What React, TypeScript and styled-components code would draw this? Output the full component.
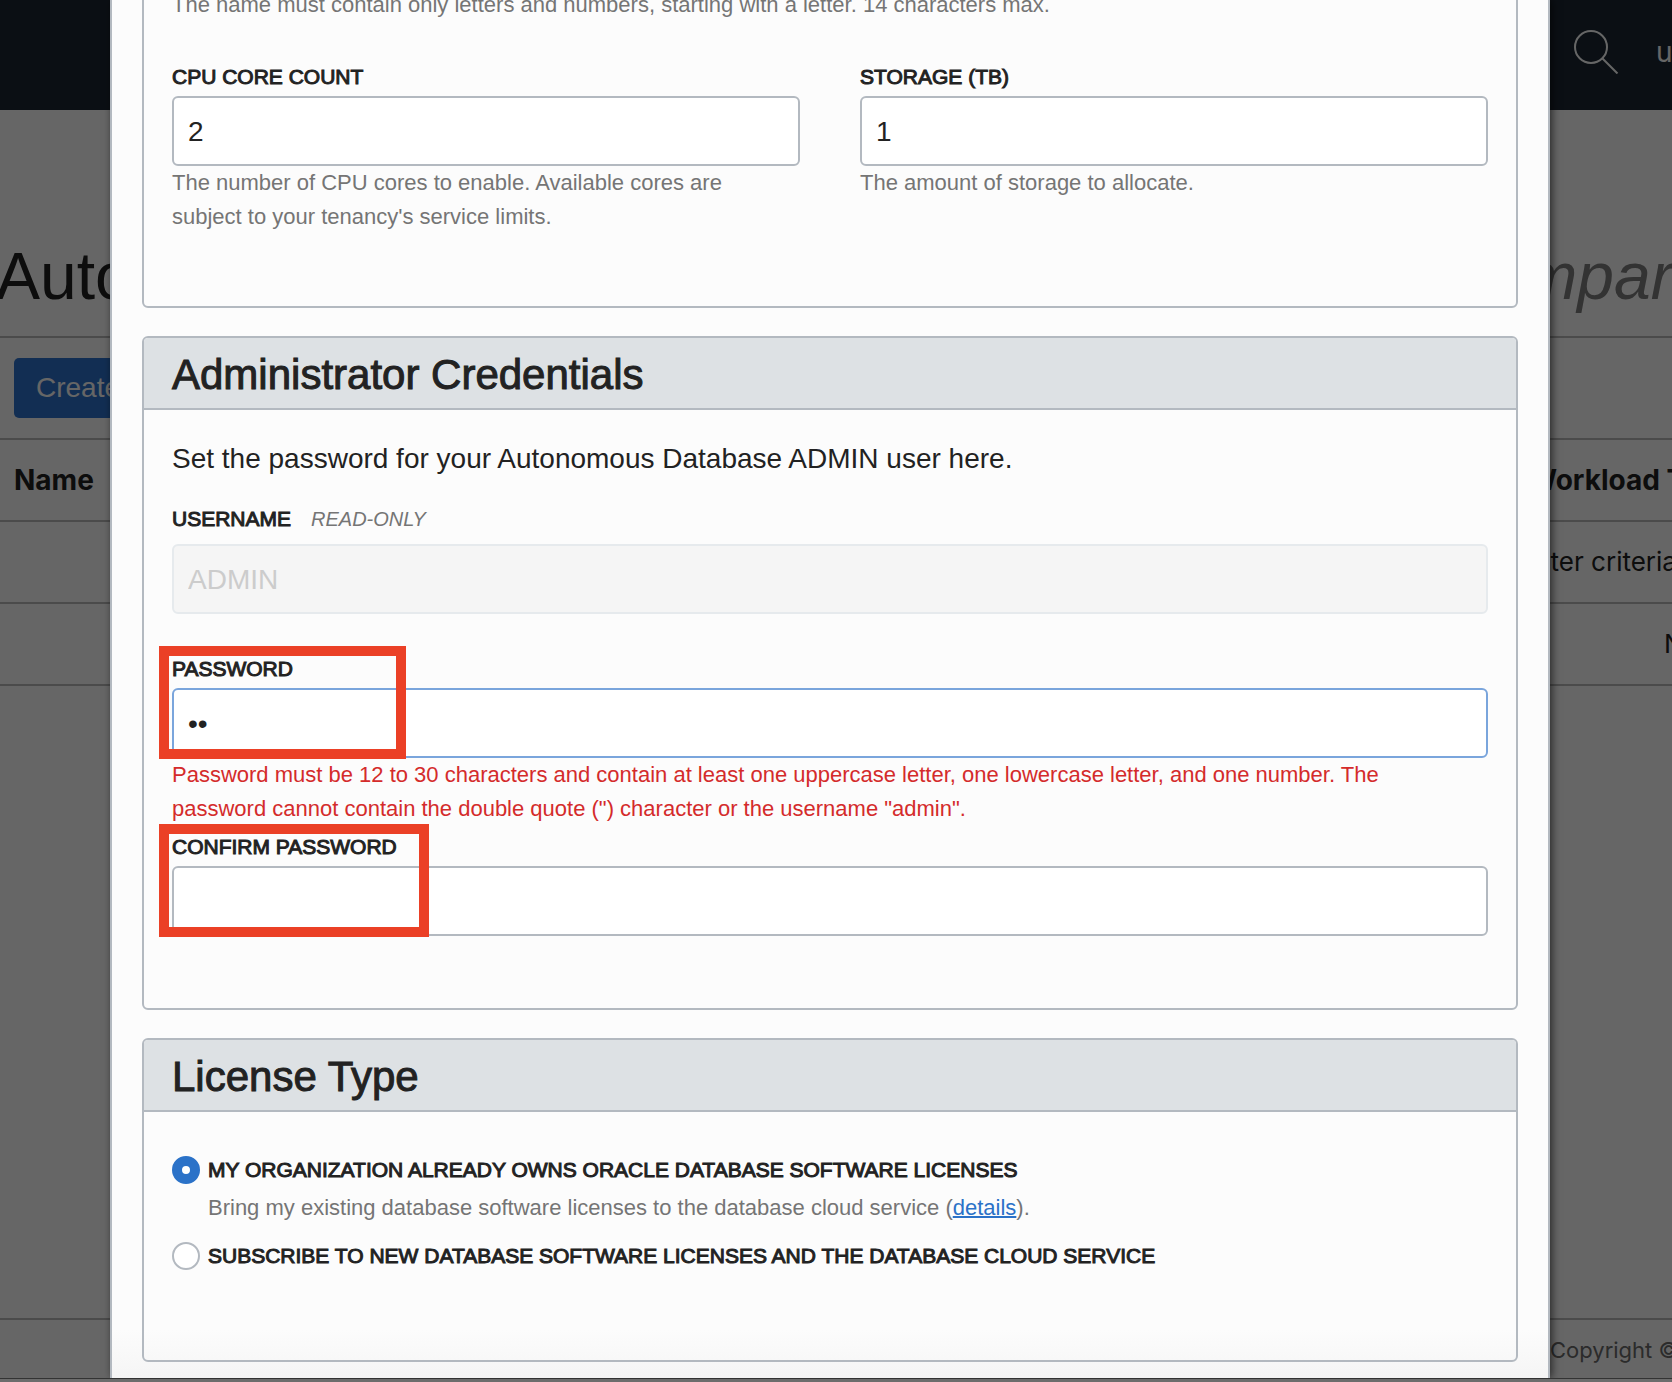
import React, { useState } from "react";
import styled, { createGlobalStyle, css } from "styled-components";

const sans = `"Liberation Sans", Arial, sans-serif`;
const ui = `Inter, "Open Sans", sans-serif`;

const ink = "#222222";
const muted = "#757575";
const line = "#b3b9c0";
const rule = "#bbbbbb";
const blue = "#2b72c8";

const GlobalStyle = createGlobalStyle`
  *, *::before, *::after { box-sizing: border-box; }
  body { margin: 0; overflow: hidden; font-family: ${sans}; color: ${ink}; }
`;

const Shell = styled.div`
  height: 100vh;
  display: flex;
  flex-direction: column;
  overflow: hidden;
`;

const Stage = styled.div`
  position: relative;
  flex: 1;
  min-height: 0;
  overflow: hidden;
`;

const WindowEdge = styled.div`
  height: 4px;
  background: #6c6c6c;
  border-top: 1px solid #333333;
`;

/* Console page behind the dialog */

const Console = styled.div`
  height: 100%;
  display: flex;
  flex-direction: column;
  background: #ffffff;
  white-space: nowrap;
`;

const TopBar = styled.header`
  flex: none;
  height: 110px;
  padding: 30px 0 36px;
  display: flex;
  justify-content: flex-end;
  gap: 36px;
  background: #1c2733;
  color: #ffffff;
  font: 28px/44px ${ui};
`;

const SearchButton = styled.button`
  width: 46px;
  height: 44px;
  padding: 0;
  border: 0;
  background: none;
  color: inherit;
`;

const Region = styled.span`
  width: 16px;
`;

const Heading = styled.h1`
  flex: none;
  height: 228px;
  margin: 0;
  padding-top: 128px;
  display: grid;
  grid-template-columns: 1fr 234px;
  border-bottom: 2px solid ${rule};
  font-size: 66px;
  font-weight: 400;
  line-height: 76px;
  text-indent: -4px;

  em {
    color: #808080;
    text-indent: 0;
  }
`;

const Toolbar = styled.div`
  flex: none;
  height: 102px;
  padding: 20px 14px;
  border-bottom: 2px solid ${rule};
`;

const CreateButton = styled.button`
  height: 60px;
  padding: 0 22px;
  border: 0;
  border-radius: 5px;
  background: #2d73cf;
  color: #ffffff;
  font: 28px ${sans};
`;

const Table = styled.table`
  width: 100%;
  table-layout: fixed;
  border-collapse: separate;
  border-spacing: 0;
  font: 28px/40px ${ui};

  th, td {
    height: 82px;
    padding: 0 14px;
    border-bottom: 2px solid ${rule};
    text-align: left;
  }

  td {
    font-size: 26px;
  }

  th:last-child, td:last-child {
    width: 158px;
  }
`;

const EndCell = styled.div`
  padding-left: 136px;
`;

const PageFooter = styled.footer`
  flex: none;
  height: 60px;
  margin-top: auto;
  padding-left: 14px;
  display: grid;
  grid-template-columns: 1fr 122px;
  border-top: 2px solid ${rule};
  color: #6b6b6b;
  font: 22px/60px ${ui};
`;

/* Dialog */

const Overlay = styled.div`
  position: absolute;
  inset: 0;
  padding: 0 122px 0 110px;
  background: rgba(0, 0, 0, 0.6);
  display: flex;
`;

const Dialog = styled.form`
  position: relative;
  flex: 1;
  min-width: 0;
  padding: 0 30px 16px;
  display: flex;
  flex-direction: column;
  justify-content: flex-end;
  gap: 28px;
  border: solid ${line};
  border-width: 0 2px;
  background: linear-gradient(to top, #f5f5f5, #fcfcfc 48px);
  box-shadow: 2px 0 8px rgba(0, 0, 0, 0.6);
`;

const Section = styled.section`
  flex: none;
  border: 2px solid ${line};
  border-radius: 6px;
`;

const mediumWeight = css`
  font-weight: 400;
  -webkit-text-stroke: 1px currentColor;
`;

const SectionTitle = styled.h2`
  ${mediumWeight}
  margin: 0;
  padding: 4px 28px 0;
  border-bottom: 2px solid ${line};
  border-radius: 4px 4px 0 0;
  background: #dde1e4;
  font-size: 42px;
  line-height: 66px;
`;

const SectionBody = styled.div`
  padding: 28px 28px 34px;
`;

const Intro = styled.p`
  margin: 0 0 22px;
  font-size: 28px;
  line-height: 42px;
`;

const Columns = styled.div`
  display: grid;
  grid-template-columns: 1fr 1fr;
  column-gap: 60px;
`;

const Field = styled.div<{ $tight?: boolean }>`
  position: relative;
  margin-bottom: ${(p) => (p.$tight ? 4 : 38)}px;
`;

const LabelRow = styled.div<{ $gap?: number }>`
  display: flex;
  gap: 20px;
  margin-bottom: ${(p) => p.$gap ?? 2}px;
`;

const Label = styled.label`
  ${mediumWeight}
  font-size: 21px;
  line-height: 34px;
`;

const Note = styled.em`
  color: ${muted};
  font-size: 20px;
  line-height: 34px;
`;

const Input = styled.input<{ $active?: boolean }>`
  display: block;
  width: 100%;
  height: 70px;
  padding: 2px 14px 0;
  border: 2px solid ${(p) => (p.$active ? "#7aa5dc" : line)};
  border-radius: 6px;
  outline: 0;
  background: #ffffff;
  color: ${ink};
  font: 28px ${sans};

  &:disabled {
    border-color: #e6eaed;
    background: #f5f5f5;
    color: #cccccc;
  }
`;

const Help = styled.p<{ $error?: boolean }>`
  margin: 0;
  padding-right: 28px;
  color: ${(p) => (p.$error ? "#d42b2b" : muted)};
  font-size: 22px;
  line-height: 34px;
`;

const Marker = styled.span<{ $wide?: boolean }>`
  position: absolute;
  left: -13px;
  top: -6px;
  width: ${(p) => (p.$wide ? 270 : 247)}px;
  height: 113px;
  border: 10px solid #eb4026;
  pointer-events: none;
`;

const Choices = styled.div`
  padding: 13px 0 53px;
  display: grid;
  row-gap: 14px;
`;

const Choice = styled.div`
  display: grid;
  grid-template-columns: 28px 1fr;
  column-gap: 8px;
  row-gap: 4px;
  align-items: center;

  ${Help} {
    grid-column: 2;
  }
`;

const Radio = styled.input`
  appearance: none;
  width: 28px;
  height: 28px;
  margin: 0;
  border: 2px solid ${line};
  border-radius: 50%;
  background: #ffffff;

  &:checked {
    border: 10px solid ${blue};
  }
`;

const Link = styled.a`
  color: ${blue};
  text-decoration: underline 2px;
`;

export default function App() {
  const [license, setLicense] = useState("own");

  return (
    <Shell>
      <GlobalStyle />
      <Stage>
        <Console>
          <TopBar>
            <SearchButton type="button" aria-label="Search">
              <svg width="46" height="44" viewBox="0 0 46 44" fill="none" stroke="currentColor" strokeWidth="2">
                <circle cx="17" cy="17" r="16" />
                <path d="M28.5 28.5 L43.5 43.5" />
              </svg>
            </SearchButton>
            <Region>u</Region>
          </TopBar>
          <Heading>
            <span>Autonomous</span>
            <em>Compartment</em>
          </Heading>
          <Toolbar>
            <CreateButton type="button">Create</CreateButton>
          </Toolbar>
          <Table>
            <thead>
              <tr>
                <th>Name</th>
                <th>Workload Type</th>
              </tr>
            </thead>
            <tbody>
              <tr>
                <td />
                <td>filter criteria</td>
              </tr>
              <tr>
                <td />
                <td>
                  <EndCell>N</EndCell>
                </td>
              </tr>
            </tbody>
          </Table>
          <PageFooter>
            <span />
            <span>Copyright ©</span>
          </PageFooter>
        </Console>

        <Overlay>
          <Dialog>
            <Section>
              <SectionBody>
                <Field>
                  <Help>The name must contain only letters and numbers, starting with a letter. 14 characters max.</Help>
                </Field>
                <Columns>
                  <Field>
                    <LabelRow>
                      <Label htmlFor="cpu">CPU CORE COUNT</Label>
                    </LabelRow>
                    <Input id="cpu" type="text" defaultValue="2" />
                    <Help>The number of CPU cores to enable. Available cores are subject to your tenancy's service limits.</Help>
                  </Field>
                  <Field>
                    <LabelRow>
                      <Label htmlFor="storage">STORAGE (TB)</Label>
                    </LabelRow>
                    <Input id="storage" type="text" defaultValue="1" />
                    <Help>The amount of storage to allocate.</Help>
                  </Field>
                </Columns>
              </SectionBody>
            </Section>

            <Section>
              <SectionTitle>Administrator Credentials</SectionTitle>
              <SectionBody>
                <Intro>Set the password for your Autonomous Database ADMIN user here.</Intro>
                <Field>
                  <LabelRow $gap={8}>
                    <Label htmlFor="username">USERNAME</Label>
                    <Note>READ-ONLY</Note>
                  </LabelRow>
                  <Input id="username" type="text" value="ADMIN" disabled readOnly />
                </Field>
                <Field $tight>
                  <LabelRow>
                    <Label htmlFor="password">PASSWORD</Label>
                  </LabelRow>
                  <Input id="password" type="password" defaultValue="ab" $active />
                  <Help $error>
                    Password must be 12 to 30 characters and contain at least one uppercase letter, one lowercase
                    letter, and one number. The password cannot contain the double quote (") character or the username
                    "admin".
                  </Help>
                  <Marker />
                </Field>
                <Field>
                  <LabelRow>
                    <Label htmlFor="confirm">CONFIRM PASSWORD</Label>
                  </LabelRow>
                  <Input id="confirm" type="password" />
                  <Marker $wide />
                </Field>
              </SectionBody>
            </Section>

            <Section>
              <SectionTitle>License Type</SectionTitle>
              <SectionBody>
                <Choices>
                  <Choice>
                    <Radio
                      id="own"
                      type="radio"
                      name="license"
                      checked={license === "own"}
                      onChange={() => setLicense("own")}
                    />
                    <Label htmlFor="own">MY ORGANIZATION ALREADY OWNS ORACLE DATABASE SOFTWARE LICENSES</Label>
                    <Help>
                      Bring my existing database software licenses to the database cloud service (
                      <Link href="#details">details</Link>).
                    </Help>
                  </Choice>
                  <Choice>
                    <Radio
                      id="subscribe"
                      type="radio"
                      name="license"
                      checked={license === "subscribe"}
                      onChange={() => setLicense("subscribe")}
                    />
                    <Label htmlFor="subscribe">SUBSCRIBE TO NEW DATABASE SOFTWARE LICENSES AND THE DATABASE CLOUD SERVICE</Label>
                  </Choice>
                </Choices>
              </SectionBody>
            </Section>
          </Dialog>
        </Overlay>
      </Stage>
      <WindowEdge />
    </Shell>
  );
}
